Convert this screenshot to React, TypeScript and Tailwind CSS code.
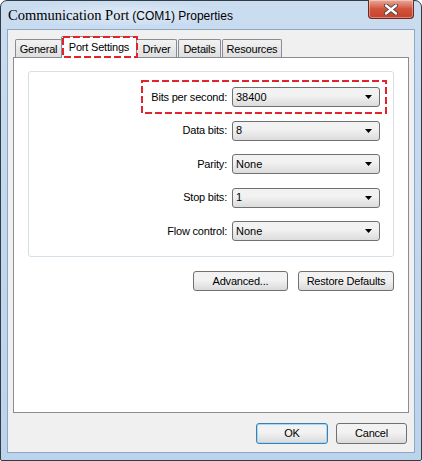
import { ReactNode } from 'react';

const ui = "font-['Liberation_Sans',Arial,sans-serif]";

interface ComboProps {
  label: string;
  value: string;
}

const fields: ComboProps[] = [
  { label: 'Bits per second:', value: '38400' },
  { label: 'Data bits:', value: '8' },
  { label: 'Parity:', value: 'None' },
  { label: 'Stop bits:', value: '1' },
  { label: 'Flow control:', value: 'None' },
];

// dashed red annotation drawn over content
function Highlight({ className, w, h }: { className: string; w: number; h: number }) {
  return (
    <svg className={`absolute pointer-events-none ${className}`} width={w} height={h} viewBox={`0 0 ${w} ${h}`}>
      <rect x="1" y="1" width={w - 2} height={h - 2} fill="none" stroke="#e3232b" strokeWidth="2" strokeDasharray="7 3" />
    </svg>
  );
}

function Combo({ label, value }: ComboProps) {
  return (
    <div className="flex items-center justify-end h-[20px]">
      <span className="text-[11px] text-black mr-[5px] tracking-[-0.2px]">{label}</span>
      <div className="w-[148px] h-[20px] rounded-[3px] border border-[#707070] bg-gradient-to-b from-[#f2f2f2] from-40% to-[#dcdcdc] flex items-center justify-between pl-[3px] pr-[7px]">
        <span className="text-[11px] text-black">{value}</span>
        <svg width="7" height="4" viewBox="0 0 7 4">
          <path d="M0 0h7L3.5 4z" fill="#000" />
        </svg>
      </div>
    </div>
  );
}

function Button({ children, className = '', isDefault = false }: { children: ReactNode; className?: string; isDefault?: boolean }) {
  return (
    <button
      className={`h-[20px] rounded-[3px] border ${isDefault ? 'border-[#3c7fb1] shadow-[inset_0_0_0_1px_#a7d9f5]' : 'border-[#707070]'} bg-gradient-to-b from-[#f2f2f2] from-45% to-[#dadada] text-[11px] text-black tracking-[-0.2px] ${className}`}
    >
      {children}
    </button>
  );
}

function Tab({ children, active = false, className = '' }: { children: ReactNode; active?: boolean; className?: string }) {
  if (active) {
    return (
      <div className={`relative h-[22px] -mb-[1px] z-10 bg-white border border-b-0 border-[#898c95] rounded-t-[2px] flex items-start justify-center pt-[2px] text-[11px] tracking-[-0.2px] text-black ${className}`}>
        {children}
      </div>
    );
  }
  return (
    <div className={`h-[18px] bg-gradient-to-b from-[#f2f2f2] to-[#dfdfdf] border border-b-0 border-[#898c95] rounded-t-[2px] flex items-center justify-center pt-[2px] text-[11px] tracking-[-0.2px] text-black ${className}`}>
      {children}
    </div>
  );
}

export default function App() {
  return (
    <div className={`${ui} w-[422px] h-[461px] bg-white`}>
      <div className="relative w-[422px] h-[461px] rounded-t-[7px] rounded-b-[2px] border border-[#333b45] bg-gradient-to-b from-[#c9dcf0] to-[#bcd3ec] flex flex-col px-[6px] pb-[7px]">
        {/* Title bar */}
        <div className="h-[28px] flex items-start justify-between">
          <div className="flex items-baseline pt-[4px] pl-[1px] bg-[radial-gradient(ellipse_at_center,rgba(255,255,255,0.45),rgba(255,255,255,0)_70%)]">
            <span className="font-['Liberation_Serif',serif] text-[14.5px] text-black">Communication Port</span>
            <span className="text-[12px] text-black ml-[3px]">(COM1) Properties</span>
          </div>
          <div className="-mt-[1px] mr-[1px] w-[46px] h-[19px] rounded-b-[4px] border border-[#6b2a20] border-t-0 bg-gradient-to-b from-[#e9a99a] via-[#d0533b] to-[#c8422a] flex items-center justify-center shadow-[inset_0_0_0_1px_rgba(255,255,255,0.35)]">
            <svg width="14" height="11" viewBox="0 0 14 11">
              <path d="M2 1.5 L12 9.5 M12 1.5 L2 9.5" stroke="#3a3a3a" strokeWidth="4" strokeLinecap="round" />
              <path d="M2 1.5 L12 9.5 M12 1.5 L2 9.5" stroke="#ffffff" strokeWidth="2.4" strokeLinecap="round" />
            </svg>
          </div>
        </div>

        {/* Client area */}
        <div className="flex-1 border border-[#8ea7c3] bg-[#f0f0f0] flex flex-col px-[5px] pt-[6px] pb-[7px]">
          <div className="relative flex items-end pl-[2px]">
            <Tab className="w-[47px]">General</Tab>
            <Tab active className="w-[76px] -mx-[1px]">Port Settings</Tab>
            <Tab className="w-[41px]">Driver</Tab>
            <Tab className="w-[43px] ml-[1px]">Details</Tab>
            <Tab className="w-[60px] ml-[1px]">Resources</Tab>
            <Highlight className="left-[49px] top-0 z-20" w={76} h={22} />
          </div>

          <div className="relative h-[356px] bg-white border border-[#898c95] flex flex-col px-[14px] pt-[13px]">
            <div className="h-[186px] rounded-[3px] border border-[#d5dfe5] flex flex-col gap-[13.5px] pt-[15px] pr-[13px]">
              {fields.map((f) => (
                <Combo key={f.label} label={f.label} value={f.value} />
              ))}
            </div>
            <div className="flex justify-end gap-[10px] mt-[14px]">
              <Button className="w-[95px]">Advanced...</Button>
              <Button className="w-[96px]">Restore Defaults</Button>
            </div>
            <Highlight className="left-[127px] top-[22px]" w={246} h={34} />
          </div>

          <div className="flex justify-end gap-[8px] mt-[10px] pr-[2px]">
            <Button isDefault className="w-[72px] h-[21px]">OK</Button>
            <Button className="w-[71px] h-[21px]">Cancel</Button>
          </div>
        </div>
      </div>
    </div>
  );
}
